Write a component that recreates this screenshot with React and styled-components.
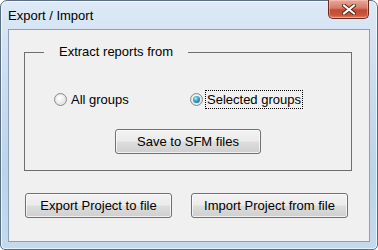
import React from 'react'
import styled, { createGlobalStyle } from 'styled-components'

const GlobalStyle = createGlobalStyle`
  html, body {
    margin: 0;
    padding: 0;
    background: #ffffff;
  }
  body {
    width: 378px;
    height: 250px;
    overflow: hidden;
  }
`;

const CloseIcon = () => (
  <svg width="14" height="11" viewBox="0 0 14 11">
    <path
      d="M2 1.5 L12 9.5 M12 1.5 L2 9.5"
      stroke="#5a2418"
      strokeWidth="4"
      strokeLinecap="square"
    />
    <path
      d="M2 1.5 L12 9.5 M12 1.5 L2 9.5"
      stroke="#ffffff"
      strokeWidth="2"
      strokeLinecap="square"
    />
  </svg>
)

const Radio = ({ checked, label, focused }) => (
  <RadioItem>
    <RadioCircle $checked={checked} />
    <RadioLabel $focused={focused}>{label}</RadioLabel>
  </RadioItem>
)

const App = () => (
  <>
    <GlobalStyle />
    <Window>
      <TitleBar>
        <Title>Export / Import</Title>
        <CloseButton>
          <CloseIcon />
        </CloseButton>
      </TitleBar>
      <Client>
        <GroupBox>
          <Legend>Extract reports from</Legend>
          <RadioRow>
            <Radio label="All groups" />
            <Radio label="Selected groups" checked focused />
          </RadioRow>
          <SaveButton $width={146}>Save to SFM files</SaveButton>
        </GroupBox>
        <ButtonRow>
          <Button $width={147}>Export Project to file</Button>
          <Button $width={157}>Import Project from file</Button>
        </ButtonRow>
      </Client>
    </Window>
  </>
)

const Window = styled.div`
  box-sizing: border-box;
  width: 378px;
  height: 250px;
  display: flex;
  flex-direction: column;
  padding: 0 7px 7px 7px;
  border: 1px solid #5b6f80;
  border-radius: 7px 7px 5px 5px;
  background: linear-gradient(to bottom, #dde9f6 0%, #cadcef 35%, #bdd3ea 70%, #c6daee 100%);
  box-shadow: inset 0 0 0 1px rgba(255, 255, 255, 0.65);
`;

const TitleBar = styled.div`
  height: 28px;
  flex: none;
  display: flex;
  align-items: flex-start;
  justify-content: space-between;
`;

const Title = styled.div`
  margin-top: 7px;
  font-family: "Liberation Sans", Arial, sans-serif;
  font-size: 13px;
  color: #000000;
  line-height: 15px;
`;

const CloseButton = styled.div`
  box-sizing: border-box;
  width: 41px;
  height: 19px;
  margin-top: -1px;
  margin-right: 1px;
  display: flex;
  align-items: center;
  justify-content: center;
  border: 1px solid #6a2a1e;
  border-top: none;
  border-radius: 0 0 5px 5px;
  background: linear-gradient(to bottom, #e9a99a 0%, #d77a66 45%, #c24a33 55%, #c9563d 85%, #e08a6e 100%);
  box-shadow: inset 0 0 0 1px rgba(255, 210, 195, 0.45);
`;

const Client = styled.div`
  flex: 1;
  display: flex;
  flex-direction: column;
  border: 1px solid #8aa0b6;
  background: #f0f0f0;
  padding: 0 17px 0 15px;
  font-family: "Liberation Sans", Arial, sans-serif;
  font-size: 13px;
  color: #000000;
`;

const GroupBox = styled.fieldset`
  margin: 14px 0 0 0;
  padding: 0;
  height: 127px;
  box-sizing: border-box;
  border: 1px solid #6e6e6e;
  display: flex;
  flex-direction: column;
  align-items: center;
  min-width: 0;
`;

const Legend = styled.legend`
  margin-left: 19px;
  padding: 0 15px;
  line-height: 16px;
`;

const RadioRow = styled.div`
  align-self: stretch;
  display: grid;
  grid-template-columns: 136px auto;
  padding-left: 29px;
  margin-top: 29px;
  height: 20px;
`;

const RadioItem = styled.div`
  display: flex;
  align-items: center;
  gap: 2px;
`;

const RadioCircle = styled.span`
  position: relative;
  box-sizing: border-box;
  width: 13px;
  height: 13px;
  border-radius: 50%;
  border: 1px solid #8b8b8b;
  background: radial-gradient(circle at 40% 35%, #ffffff 0%, #f1f1f1 40%, #cfcfcf 100%);
  box-shadow: inset 0 0 0 1px #e4e4e4;

  &::after {
    content: '';
    display: ${p => (p.$checked ? 'block' : 'none')};
    position: absolute;
    left: 2px;
    top: 2px;
    width: 7px;
    height: 7px;
    border-radius: 50%;
    background: radial-gradient(circle at 40% 35%, #b6f0ff 0%, #3aa6c8 40%, #145a78 100%);
  }
`;

const RadioLabel = styled.span`
  line-height: 17px;
  padding: 0 1px;
  border: 1px dotted ${p => (p.$focused ? '#000000' : 'transparent')};
`;

const Button = styled.button`
  box-sizing: border-box;
  width: ${p => p.$width}px;
  height: 25px;
  padding: 0;
  border: 1px solid #707070;
  border-radius: 3px;
  background: linear-gradient(to bottom, #f2f2f2 0%, #ebebeb 48%, #dddddd 52%, #cfcfcf 100%);
  box-shadow: inset 0 0 0 1px rgba(255, 255, 255, 0.7);
  font-family: "Liberation Sans", Arial, sans-serif;
  font-size: 13px;
  color: #000000;
`;

const SaveButton = styled(Button)`
  margin-top: 20px;
`;

const ButtonRow = styled.div`
  display: flex;
  gap: 19px;
  padding-left: 1px;
  margin-top: 22px;
`;

export default App
